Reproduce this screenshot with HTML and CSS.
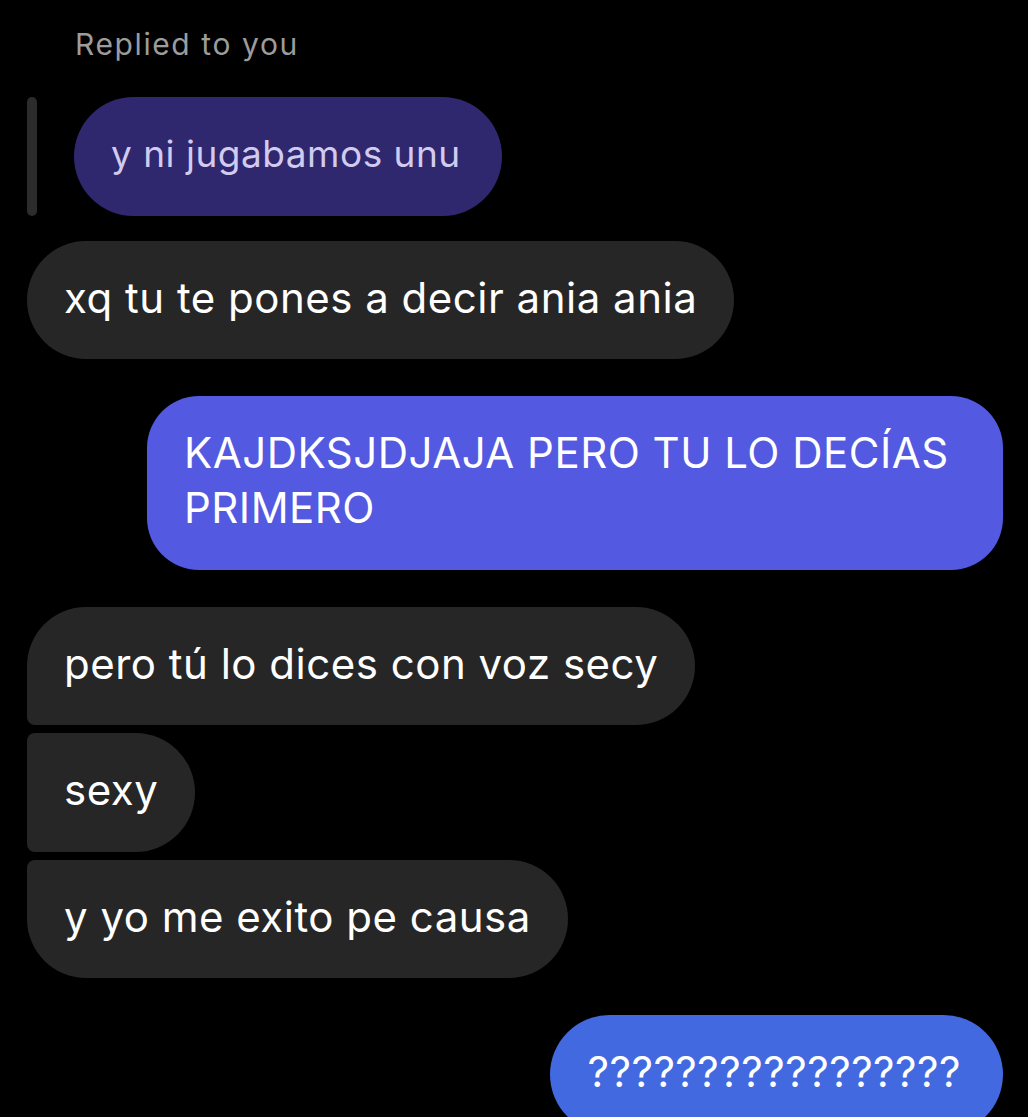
FILE: index.html
```html
<!DOCTYPE html>
<html lang="es">
<head>
    <meta charset="UTF-8">
    <title>Chat</title>
    <link rel="stylesheet" href="styles.css">
</head>
<body>

<div class="thread">
    <p class="reply-label">Replied to you</p>
    <div class="reply-row">
        <span class="reply-bar"></span>
        <p class="bubble quoted">y ni jugabamos unu</p>
    </div>

    <p class="bubble them single">xq tu te pones a decir ania ania</p>

    <p class="bubble me wide">KAJDKSJDJAJA PERO TU LO DECÍAS PRIMERO</p>

    <div class="group">
        <p class="bubble them first">pero tú lo dices con voz secy</p>
        <p class="bubble them middle">sexy</p>
        <p class="bubble them last">y yo me exito pe causa</p>
    </div>

    <p class="bubble me bottom">?????????????????</p>
</div>

</body>
</html>
```

FILE: styles.css
```css
html, body, div, p, span {
    margin: 0;
    padding: 0;
}
html, body {
    height: 1117px;
    overflow: hidden;
    background-color: #000000;
}
body {
    font-family: "Inter", "Roboto", sans-serif;
    color: #ffffff;
}
.thread {
    display: flex;
    flex-direction: column;
    align-items: flex-start;
    padding: 26px 25px 0 27px;
}
.reply-label {
    font-size: 30px;
    line-height: 36px;
    letter-spacing: 1.6px;
    color: #9c9c9c;
    margin-left: 48px;
}
.reply-row {
    display: flex;
    align-items: stretch;
    gap: 37px;
    margin-top: 35px;
}
.reply-bar {
    width: 10px;
    border-radius: 5px;
    background-color: #2c2c2c;
}
.bubble {
    font-size: 42px;
    line-height: 55px;
    letter-spacing: 0.5px;
    padding: 29px 37px 34.5px;
    border-radius: 60px;
    max-width: 856px;
    box-sizing: border-box;
}
.quoted {
    font-size: 37px;
    letter-spacing: 0.5px;
    padding-right: 41px;
    background-color: #30286e;
    color: #d2cbf0;
}
.them {
    background-color: #262626;
}
.me {
    align-self: flex-end;
    background-color: #5359e0;
}
.single {
    margin-top: 25px;
}
.wide {
    margin-top: 37px;
    border-radius: 52px;
}
.group {
    display: flex;
    flex-direction: column;
    align-items: flex-start;
    gap: 8px;
    margin-top: 37px;
}
.first {
    border-bottom-left-radius: 8px;
}
.middle {
    border-top-left-radius: 8px;
    border-bottom-left-radius: 8px;
}
.last {
    border-top-left-radius: 8px;
}
.bottom {
    margin-top: 37px;
    padding-right: 42px;
    background-color: #4369e0;
}
```
